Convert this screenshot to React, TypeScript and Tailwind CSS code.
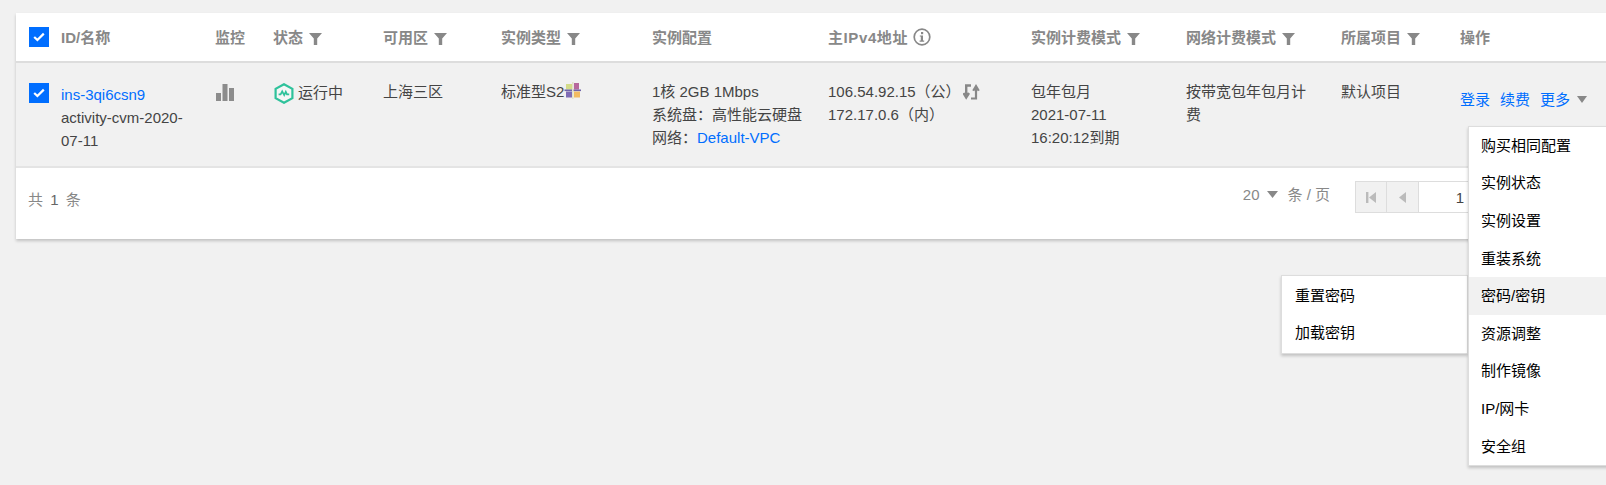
import React from 'react';

const FONT = "font-['Liberation_Sans','Noto_Sans_CJK_SC',sans-serif]";
const GRID = 'grid grid-cols-[45px_154px_58px_110px_118px_151px_176px_203px_155px_155px_119px_1fr]';

const FilterIcon = () => (
  <svg width="13" height="12" viewBox="0 0 13 12" className="ml-[6px] shrink-0 mt-[4px]">
    <path d="M0 0h13L8.2 5.4V12H4.8V5.4z" fill="#888888" />
  </svg>
);

const Checkbox = () => (
  <div className="w-5 h-5 bg-[#006eff] flex items-center justify-center">
    <svg width="12" height="10" viewBox="0 0 12 10">
      <path d="M1.2 5l3.2 3L10.8 1.6" fill="none" stroke="#ffffff" strokeWidth="2.2" />
    </svg>
  </div>
);

const HeaderCell = ({ label, filter }: { label: string; filter?: boolean }) => (
  <div className="flex items-center text-[#888888] font-bold">
    <span>{label}</span>
    {filter && <FilterIcon />}
  </div>
);

const MenuItem = ({ label, active, wide }: { label: string; active?: boolean; wide?: boolean }) => (
  <div className={`h-[37.6px] flex items-center pb-px text-black ${wide ? 'px-[13px]' : 'px-[12px]'} ${active ? 'bg-[#f1f1f1]' : ''}`}>{label}</div>
);

const menuItems = ['购买相同配置', '实例状态', '实例设置', '重装系统', '密码/密钥', '资源调整', '制作镜像', 'IP/网卡', '安全组'];

const App: React.FC = () => {
  return (
    <div className={`relative w-[1606px] h-[485px] overflow-hidden bg-[#f1f1f1] pt-[13px] pl-4 text-[15px] leading-[23px] text-[#444444] ${FONT}`}>
      <div className="bg-white shadow-[0_2px_3px_rgba(0,0,0,0.2)]">
        {/* header */}
        <div className={`${GRID} h-[50px] items-center border-b-2 border-[#dddddd]`}>
          <div className="pl-[13px]">
            <Checkbox />
          </div>
          <HeaderCell label="ID/名称" />
          <HeaderCell label="监控" />
          <HeaderCell label="状态" filter />
          <HeaderCell label="可用区" filter />
          <HeaderCell label="实例类型" filter />
          <HeaderCell label="实例配置" />
          <div className="flex items-center text-[#888888] font-bold">
            <span className="tracking-[0.6px]">主IPv4地址</span>
            <svg width="18" height="18" viewBox="0 0 18 18" className="ml-[5px]">
              <circle cx="9" cy="9" r="7.8" fill="none" stroke="#888888" strokeWidth="1.7" />
              <rect x="8" y="4" width="2.2" height="2.2" fill="#888888" />
              <path d="M6.8 7.4H10v5.2h1.2v1.1H6.6v-1.1h1.2V8.5h-1z" fill="#888888" />
            </svg>
          </div>
          <HeaderCell label="实例计费模式" filter />
          <HeaderCell label="网络计费模式" filter />
          <HeaderCell label="所属项目" filter />
          <HeaderCell label="操作" />
        </div>

        {/* row */}
        <div className={`${GRID} h-[105px] bg-[#f1f1f1] border-b-2 border-[#e4e4e4] pt-[17px]`}>
          <div className="pl-[13px] pt-[3px]">
            <Checkbox />
          </div>
          <div className="pt-[3px] pr-[16px]">
            <div className="text-[#006eff]">ins-3qi6csn9</div>
            <div>activity-cvm-2020-07-11</div>
          </div>
          <div className="pt-[4px]">
            <svg width="18" height="17" viewBox="0 0 18 17" className="ml-[1px]">
              <rect x="0" y="9" width="5" height="8" fill="#8c8c8c" />
              <rect x="6.5" y="0" width="5" height="17" fill="#8c8c8c" />
              <rect x="13" y="4" width="5" height="13" fill="#8c8c8c" />
            </svg>
          </div>
          <div className="flex items-start pl-px pt-px">
            <svg width="20" height="21" viewBox="0 0 20 21" className="mr-1 mt-[2px] shrink-0">
              <path d="M10 1.2l8.4 4.7v9.2L10 19.8l-8.4-4.7V5.9z" fill="#ffffff" fillOpacity="0.4" stroke="#2fc29b" strokeWidth="2.2" />
              <path d="M4.6 11.4h2l1.6-3 2 3.8 1.6-3.4 1.2 2.6h2.2" fill="none" stroke="#2fc29b" strokeWidth="1.7" />
            </svg>
            <span>运行中</span>
          </div>
          <div>上海三区</div>
          <div className="flex items-start">
            <span>标准型S2</span>
            <svg width="18" height="17" viewBox="0 0 18 17" className="mt-[2px] shrink-0 blur-[0.5px]">
              <rect x="2" y="2" width="6" height="5.5" fill="#d3dc8a" />
              <rect x="10" y="1" width="5" height="6.5" fill="#b7699c" />
              <rect x="2" y="9.5" width="6" height="6" fill="#7f6cb5" />
              <rect x="10" y="9.5" width="6" height="6" fill="#f2bb62" />
              <rect x="0.5" y="7.5" width="16.5" height="1.6" fill="#6f63a8" />
              <rect x="8" y="0" width="1.6" height="17" fill="#e3e3c8" />
            </svg>
          </div>
          <div>
            <div>1核 2GB 1Mbps</div>
            <div>系统盘：高性能云硬盘</div>
            <div>
              网络：<span className="text-[#006eff]">Default-VPC</span>
            </div>
          </div>
          <div>
            <div className="flex items-center">
              <span>106.54.92.15（公）</span>
              <svg width="17" height="16" viewBox="0 0 17 16" className="ml-[2px] shrink-0">
                <path d="M8 1.5H3.2V11M0.5 9L3.2 13.5 6 9" fill="none" stroke="#888888" strokeWidth="2.4" />
                <path d="M8 14.5h5V4M10.2 6.8L13 2.2 15.8 6.8" fill="none" stroke="#888888" strokeWidth="2.2" />
              </svg>
            </div>
            <div>172.17.0.6（内）</div>
          </div>
          <div>
            <div>包年包月</div>
            <div>2021-07-11</div>
            <div>16:20:12到期</div>
          </div>
          <div className="pr-[28px]">按带宽包年包月计费</div>
          <div>默认项目</div>
          <div className="flex items-center gap-[10px] h-[23px] mt-[8px] text-[#006eff]">
            <span>登录</span>
            <span>续费</span>
            <span className="flex items-center">
              更多
              <svg width="10" height="7" viewBox="0 0 10 7" className="ml-[7px]">
                <path d="M0 0h10L5 7z" fill="#888888" />
              </svg>
            </span>
          </div>
        </div>

        {/* footer */}
        <div className="h-[71px] flex items-start justify-between pl-3 text-[#888888]">
          <div className="pt-[20px] [word-spacing:3px]">
            共 <span className="text-[#666666]">1</span> 条
          </div>
          <div className="flex items-start pt-[13px]">
            <div className="flex items-center h-[27px]">
              <span>20</span>
              <svg width="11" height="7" viewBox="0 0 11 7" className="ml-[8px] mr-[9px]">
                <path d="M0 0h11L5.5 7z" fill="#888888" />
              </svg>
              <span>条 / 页</span>
            </div>
            <div className="flex items-center h-[32px] ml-[25px] border border-[#dddddd] w-[251px]">
              <div className="w-[31px] h-full bg-[#f1f1f1] border-r border-[#dddddd] flex items-center justify-center">
                <svg width="10" height="11" viewBox="0 0 10 11">
                  <path d="M0 0h2.4v11H0zM10 0v11L3 5.5z" fill="#bbbbbb" />
                </svg>
              </div>
              <div className="w-[32px] h-full bg-[#f1f1f1] border-r border-[#dddddd] flex items-center justify-center">
                <svg width="7" height="11" viewBox="0 0 7 11">
                  <path d="M7 0v11L0 5.5z" fill="#bbbbbb" />
                </svg>
              </div>
              <div className="w-[45px] text-right text-[#444444]">1</div>
            </div>
          </div>
        </div>
      </div>

      {/* submenu */}
      <div className="absolute left-[1281px] top-[275px] w-[187px] py-px bg-white border border-[#dddddd] shadow-[0_2px_3px_rgba(0,0,0,0.2)]">
        <MenuItem label="重置密码" wide />
        <MenuItem label="加载密钥" wide />
      </div>

      {/* dropdown menu */}
      <div className="absolute left-[1468px] top-[126px] w-[160px] bg-white border-l border-y border-[#dddddd] shadow-[0_2px_3px_rgba(0,0,0,0.2)]">
        {menuItems.map((item) => (
          <MenuItem key={item} label={item} active={item === '密码/密钥'} />
        ))}
      </div>
    </div>
  );
};

export default App;
